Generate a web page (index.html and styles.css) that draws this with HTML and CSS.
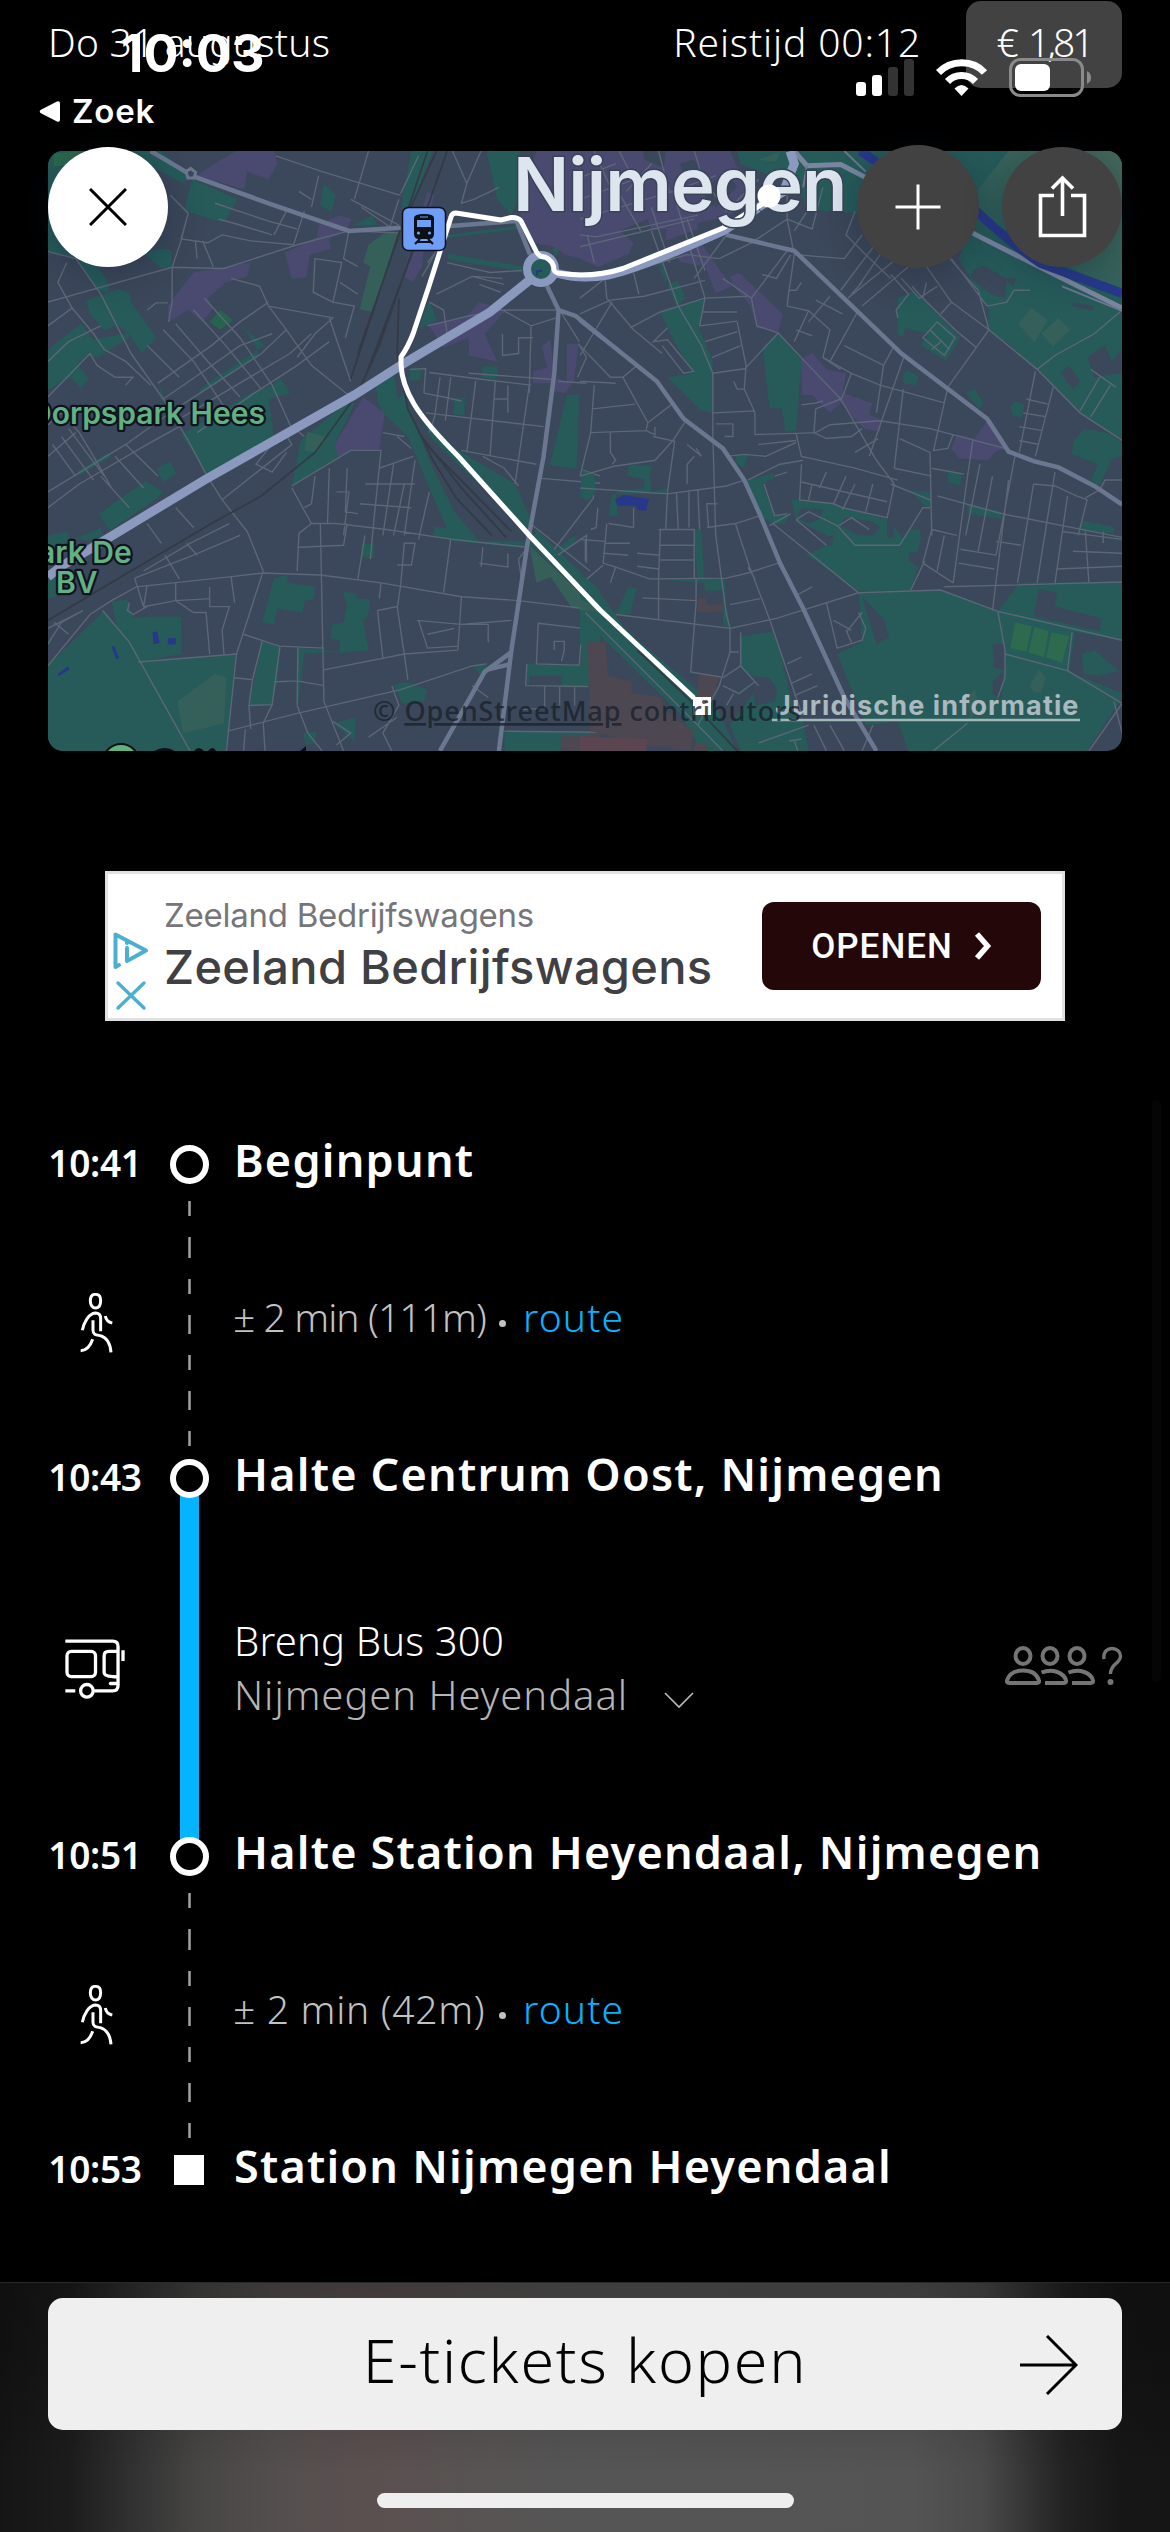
FILE: index.html
```html
<!DOCTYPE html>
<html lang="nl">
<head>
<meta charset="utf-8">
<title>Reisadvies</title>
<link rel="stylesheet" href="styles.css">
</head>
<body>
<main class="screen">
  <header class="trip-head">
    <span class="trip-date">Do 31 augustus</span>
    <span class="trip-time">Reistijd 00:12</span>
    <span class="trip-price">€ 1,81</span>
  </header>

  <div class="status">
    <div class="status-row">
      <span class="clock">10:03</span>
      <svg class="status-icons" viewBox="856 58 236 40" width="236" height="40">
        <g fill="#fff"><rect x="856" y="82" width="10" height="14" rx="3"/><rect x="872" y="75" width="10" height="21" rx="3"/></g>
        <g fill="#333"><rect x="888" y="67" width="10" height="29" rx="3"/><rect x="904" y="59" width="10" height="37" rx="3"/></g>
        <g fill="none" stroke="#fff" stroke-width="7"><path d="M938.500 72.500C951 59.500 973 59.500 984.500 72.500"/><path d="M947.500 81.500C955 73.500 968 73.500 975.500 81.500"/></g>
        <path d="M954.500 88.500Q961.500 81.500 968.500 88.500L961.500 96Z" fill="#fff"/>
        <rect x="1010.500" y="59.500" width="72" height="36" rx="10" fill="none" stroke="#8a8a8a" stroke-width="3"/>
        <rect x="1015" y="64" width="35" height="27" rx="6" fill="#fff"/>
        <path d="M1087 71Q1091 73 1091 77.500T1087 84Z" fill="#8a8a8a"/>
      </svg>
    </div>
    <div class="back-row">
      <svg viewBox="0 0 21 21" width="21" height="21"><path d="M1.500 9Q0 10.500 1.500 12L18 20.500Q21 21.500 21 18.500V2.500Q21-.5 18 .5Z" fill="#fff"/></svg>
      <span>Zoek</span>
    </div>
  </div>

  <section class="map">
    <svg class="map-art" viewBox="0 0 1074 600" width="1074" height="600">
      <defs>
        <linearGradient id="hill" x1="0" y1="1" x2="1" y2="0"><stop offset="0" stop-color="#265b5a"/><stop offset="1" stop-color="#45695a"/></linearGradient>
      </defs>
      <!-- western half -->
      <g transform="translate(-8 -11) scale(.35714 .39541)">
        <g class="green">
          <path d="M22 28H340L420 95 400 110 300 60V120H160L22 180Z"/>
          <path d="M22 180L140 290 195 365 190 385 165 380 100 300 22 282Z"/>
          <path d="M130 405L215 378 250 385 255 410 325 500 285 540 250 490 195 455 212 470 180 482 140 440Z"/>
          <path d="M295 290Q330 265 368 280V320L340 325Z"/>
          <path d="M425 98L553 150 515 210 405 178Z"/>
          <path d="M795 110L830 140 815 182 784 165Z"/>
          <path d="M22 530L115 465 150 505 250 487 250 500 160 550 132 545 105 565 137 605 115 628 85 600 22 632Z"/>
          <path d="M565 470L630 520 610 530ZM445 630L610 530V545L450 640ZM330 610L350 655 342 665Z"/>
          <path d="M395 745L590 640 650 620 670 600 702 640 640 655 655 750 560 810 470 848Z"/>
          <path d="M325 833L365 812 382 845 345 865ZM105 838L190 790 200 800 110 850ZM165 945L295 862 345 890 330 905 195 988ZM22 1000L75 990 90 1020 22 1050ZM95 1010L170 980 180 1015ZM22 1115L45 1090V1155L22 1160Z"/>
          <path d="M730 760L870 655 880 668 825 770 865 785 705 875Z"/>
          <path d="M940 620L990 590 1005 670 960 690 945 660Z"/>
          <path d="M960 690L1020 640 1060 740 1090 810 1160 940 1230 1015 1365 1015V1032L1155 1015 1095 890 1030 750Z"/>
          <path d="M1030 640Q1060 700 1170 785L1200 800 1330 870 1370 950V990L1100 760Z"/>
          <path d="M1390 985L1568 1140V1190L1370 1020Z"/>
          <path d="M1040 28H1100L1035 180 1010 170ZM880 215L930 190 945 215ZM1145 240L1350 215 1340 225 1140 248ZM1145 288L1355 320 1350 332 1140 302Z"/>
          <path d="M1250 28H1345V130L1320 190 1280 150ZM1435 275L1475 250 1440 300ZM1065 465L1090 405 1112 455 1060 478Z"/>
          <path d="M1035 578L1070 580 1065 605 1035 610ZM1240 572L1282 572 1278 607 1235 600ZM1160 655L1190 650 1188 695 1157 697ZM1475 645L1510 645 1502 832 1428 822Z"/>
          <path d="M1520 835L1553 845 1550 890 1535 910 1515 905ZM1450 1035L1495 1000 1505 1010 1460 1045ZM1105 978L1145 983 1150 1010 1100 1005ZM900 1022L936 1022 935 1058 898 1056Z"/>
          <path d="M655 1108L693 1100V1120L770 1130 768 1160 742 1165 735 1195 665 1185 655 1225 622 1220Z"/>
          <path d="M848 1142L885 1147 888 1160 925 1162 918 1205 905 1215 920 1290 840 1298V1265L813 1260 818 1225 850 1220 860 1178Z"/>
          <path d="M22 1328L180 1190 240 1255 275 1322 548 1298 522 1545H22Z"/>
          <path d="M200 1168L245 1162 260 1210 300 1205 395 1205 397 1300 275 1320 220 1245Z"/>
          <path d="M622 1268L672 1280 665 1370 650 1428 585 1430ZM722 1285L850 1295 740 1298 722 1430ZM988 1378L1030 1370 1085 1390 1075 1420 1015 1425ZM735 1500L775 1495 770 1525 745 1530ZM820 1475L885 1460 880 1520Z"/>
          <path d="M1212 1330L1255 1325 1235 1355ZM1363 1325L1515 1328 1520 1195 1568 1230V1270L1538 1270V1380H1460V1355H1370V1380L1363 1370ZM1300 1495H1568V1545H1300Z"/>
        </g>
        <g class="meadow">
          <path d="M965 235L1008 235 930 435 895 428 925 320 905 310 920 265Z"/>
          <path d="M748 738L800 750 770 790 740 785ZM1370 1025L1560 1185 1490 1185 1430 1105 1390 1120Z"/>
          <path d="M385 1420L490 1350 522 1360 515 1475 470 1485 400 1500Z"/>
          <path d="M475 460L505 430 540 455 505 480Z" fill="#27644f"/>
          <path d="M38 35L110 28V60L38 67Z" fill="#2b6a4c"/>
        </g>
        <g class="shops">
          <path d="M505 50L550 28H655L665 60 640 100 580 80 572 125 440 90Z"/>
          <path d="M430 335L590 310 580 345 520 360 470 400 485 425 455 460 415 430 360 460 358 420Z"/>
          <path d="M685 285L775 245 780 215 840 190 872 200 860 225 810 250 815 275 755 290 745 348 705 350Z"/>
          <path d="M1085 130L1105 140 1080 215 1070 320 1045 358 1015 345Z"/>
          <path d="M1340 160L1390 28H1568V310L1470 290 1440 270 1380 260 1350 200Z"/>
          <path d="M1085 465L1190 450 1230 410 1305 430 1245 490 1280 560 1200 545 1200 500 1130 525Z"/>
          <path d="M1405 520L1430 505 1440 600 1475 610V515H1508L1495 610 1470 640 1435 635 1430 615 1380 615 1382 585 1420 575Z"/>
          <path d="M905 650L965 690 950 782 870 785 835 800 825 770Z"/>
        </g>
        <g class="clay"><path d="M1538 1270H1568V1545H1458V1508H1538Z"/></g>
        <g class="water"><path d="M315 1245L328 1243 335 1272 318 1275ZM358 1260H380V1276H358ZM200 1282L208 1280 222 1310 214 1314ZM50 1350L80 1330 82 1340 52 1356Z"/></g>
        <g class="street">
          <path d="M22 282L100 300 170 390 255 540 345 655 415 760 465 845 510 910 580 990 625 1090 550 1300 522 1545"/>
          <path d="M22 410L370 322 515 325 720 265 865 230 1010 235M22 470L90 425 50 360 75 310M90 425L150 490 180 530 240 560 310 620M22 560L80 510 170 470"/>
          <path d="M365 140L415 185 395 255 370 322 370 410 360 460M300 430L325 412 358 412M415 185L395 250 470 260 510 240 590 255 710 265 740 180M490 160L640 205 720 225M500 200L560 215 650 240M455 255L485 320M435 255L440 300"/>
          <path d="M535 350L615 370 640 420 690 480 760 570 870 650M460 400L560 500 650 620 700 720 740 750M430 430L520 520 620 630M380 465L470 560 560 650M345 480L430 560 520 680M300 520L390 600"/>
          <path d="M330 615L480 520 560 460 640 410M345 655L450 590 560 520 650 490M380 680L500 610 620 540 690 480M400 700L550 620 700 540 760 490M440 740L600 640 720 570 810 510M640 420L820 450 770 490 720 550"/>
          <path d="M22 650L140 540 160 570 210 600 260 600 240 620M22 720L60 690 110 740 150 800 200 880M60 750L150 860M35 770L100 850M80 730L180 850M22 800L100 740M22 890L240 770 380 680M22 930L110 870 300 770 400 720M170 850L250 930M210 800L290 880M240 770L330 850"/>
          <path d="M660 40L790 80 1010 140M780 90L760 170M725 130L760 150M920 28L880 150M900 170L980 220 1005 150M1060 40L1010 135M870 150L1005 215M690 180L655 240M865 230L850 300 890 320M770 300L845 310 820 410 765 385ZM820 410L880 420 855 500M840 360L890 390M810 450L870 610"/>
          <path d="M1155 28L1195 110 1180 160 1215 150 1285 120M1195 110L1235 28M1085 310L1145 240M1070 345L1105 290M1140 310L1260 335 1350 330M1110 390L1210 345 1300 365M1090 410L1130 430 1140 490M1085 470L1200 445 1290 430 1450 430M1210 345L1295 350M1230 365L1290 385M1295 430L1375 470 1445 450M1375 470L1370 640"/>
          <path d="M1295 490V545L1340 540V500H1380M1200 590L1430 605M1035 580L1080 578 1075 640M1090 588L1235 605 1375 620M1080 690L1410 725M1075 640L1130 650 1180 660M1120 600L1105 700 1090 740M1150 600L1135 710M1220 610L1195 790M1275 610L1260 800M1310 620V690M1270 655H1310M1370 620L1330 870M1180 785L1390 820M1240 800L1300 830 1340 875"/>
          <path d="M1450 610L1530 615M1508 515L1530 550 1505 600M1455 430L1510 510M1395 855L1568 868M1440 1035L1550 905 1535 840M1530 1070V1000L1450 1050M1568 850L1520 835M1380 975L1540 1090"/>
          <path d="M510 910L705 770 685 740 640 780 605 820 650 840 690 790M705 880L760 970 830 970 970 985 1155 1010 1365 1030M770 850L760 920 740 930M705 875L870 785H955L950 830 1045 800M860 830L855 940 890 945M810 830L805 970M830 890L865 890 850 1000M955 785L935 960 925 1060M990 820L960 1000M910 870H1050M895 920L1040 930M1050 810L1020 1000M1090 890L1060 1010M1020 870L990 1000M960 740L1020 750M1040 780L1000 750"/>
          <path d="M760 970L725 995 720 1090M785 970L795 1420 850 1545M725 1030L850 1025 860 970M785 1100L625 1095 530 1105 270 1130 200 1165 140 1200 22 1330M785 1100L955 1120 1180 1155 1340 1165 1568 1190M890 1110L910 1000M1010 1125L1020 1020 1050 1020 1040 1075 1000 1075M1130 1145L1150 1010M1240 1030L1235 1080M1230 1070L1310 1080V1045M1350 1120L1340 1060 1365 1030"/>
          <path d="M265 1108L430 1050 560 1000M290 1090L420 1020 530 970M265 1108L290 1180 380 1165 475 1160M300 1125L290 1180 M380 1120V1165L430 1195H465L475 1300M475 1130V1180L530 1180 510 1240 515 1300M535 1105L545 1170M250 1170L245 1190 260 1200 300 1180M22 1275L60 1220 120 1190M22 1235L120 1190M40 1220L80 1250M350 1050L390 1110M300 970L340 1020M410 1020L440 1050M380 930L430 980"/>
          <path d="M175 1190L250 1270 420 1545M275 1320L550 1300M570 1250L670 1280 795 1285M545 1360L595 1365 622 1268M595 1365L585 1430 650 1428 672 1280M660 1370L720 1368 795 1380M722 1285L720 1430M525 1495L720 1450 1010 1390 1210 1330 1250 1325M795 1340L1020 1300M945 1190L1000 1180 1020 1300 1030 1365M945 1190L960 1310M955 1120L950 1160M1000 1185L1010 1125M1180 1155L1170 1290 1020 1300M1055 1215L1180 1225 1320 1215M1060 1215L1085 1285 1170 1280M1085 1250L1160 1235M1180 1225H1255V1270"/>
          <path d="M575 1490L570 1545M625 1475L630 1545M585 1430L590 1490M650 1428L625 1475M720 1430L750 1500 790 1545M820 1470L870 1500 830 1530M985 1380L1005 1430 960 1500 985 1545M920 1510L1000 1460M1210 1380L1255 1410M1395 1222L1518 1235 1510 1328 1390 1325ZM1440 1290V1268H1468V1290L1460 1318M1363 1325L1360 1380 1535 1382M1300 1495L1568 1498M1413 1380V1440M1455 1380V1430M1497 1380V1430M1345 1440L1400 1438"/>
        </g>
        <g class="rail">
          <path d="M1110 28L1005 235 870 605M1140 28L1050 260 950 520 890 640 770 790 620 900 480 970 180 1130 22 1215M1085 28L1040 150 890 540M1005 400L1000 540 1030 680 1100 810 1165 905 1265 1000M1060 740L1180 880 1305 1005M1080 770L1320 990M1045 280L910 600"/>
        </g>
        <g class="road">
          <path d="M310 28L430 92 640 160 865 230 1010 222M1140 218L1330 205M1420 370L1452 430 1440 590 1410 800 1365 1020 1320 1290 1285 1545M1330 195L1372 290M1452 430L1500 445 1568 495M1320 1295L1245 1345 1120 1545M1250 1340L1320 1325"/>
          <path d="M422 72L436 82 431 96H414L409 80Z" fill="#3b475a" style="stroke-width:3"/>
        </g>
        <path class="artery" d="M22 1105L60 1078 185 1010 460 860 880 645 1010 570 1140 500 1260 435 1370 355"/>
      </g>
      <!-- eastern half -->
      <g transform="translate(532 -11) scale(.35714 .39541)">
        <g class="green">
          <path d="M440 28H1518V500L1400 430 1340 390 1120 330 980 190 770 185 640 175 600 110 560 100 450 60Z"/>
          <path d="M1120 190L1518 420V760L1400 690 1280 580 1140 480 1145 430 1060 300Z"/>
          <path d="M195 230L215 235 245 350 240 360 225 330ZM245 365L275 355 295 400 270 420ZM225 435L350 402 335 480 372 560V690L340 685 245 600 320 590 270 520Z"/>
          <path d="M512 525L555 488 620 555 605 735 575 738 565 678 530 678Z"/>
          <path d="M890 400L935 382 1065 500 1025 558 955 520 975 490 910 475 905 500 888 490Z"/>
          <path d="M905 590L920 582 948 598 940 620 905 615ZM1080 640L1105 630 1130 665 1120 680ZM1205 675L1220 660 1245 670 1235 705 1210 695ZM1030 840H1070L1065 875 1030 865ZM1380 765L1410 730 1475 740 1518 765V800L1490 805 1455 875 1430 860 1450 820 1378 795Z"/>
          <path d="M435 800L470 795 460 830 440 820ZM468 862L540 842 545 855 510 870 545 950 590 945 570 972 540 970 505 950Z"/>
          <path d="M592 910L690 915 780 940 860 960V1005H878V980L905 1005 920 985 950 985 955 1005 945 1040 920 1045 920 1065 945 1080 925 1140H780L635 1050 700 1020 690 1000 605 960Z"/>
          <path d="M925 885L985 890V930L965 925ZM1085 920L1180 940V958L1085 945ZM1405 962L1495 978V995L1400 988ZM135 820L202 825 195 850 200 890 245 880 240 895 90 895 80 950H105L100 890 180 880V858L135 850Z"/>
          <path d="M320 985L340 985 348 1110 328 1108ZM135 1130L158 1135 140 1200 100 1200ZM195 1110L405 1108 410 1180 425 1240 400 1225 400 1140 350 1140 348 1120Z"/>
          <path d="M0 1095L60 1150 130 1240 380 1430 440 1545H340L280 1450 0 1205Z"/>
          <path d="M450 1255L540 1243 620 1450 640 1545H450L420 1480 500 1380 450 1330Z"/>
          <path d="M780 1145L1010 1138 1170 1192 1230 1120 1518 1118V1410L1420 1545H830L720 1300 790 1270Z"/>
          <path d="M5 835L40 845 45 890 25 912 0 905ZM0 1210L30 1205 25 1280 0 1275Z"/>
        </g>
        <g class="blocks">
          <path d="M1100 330L1130 318 1195 350 1190 400 1150 390 1095 350ZM1185 350H1220L1215 370ZM1140 480L1200 515 1250 560 1240 585 1210 570 1170 550ZM1420 550L1470 520 1490 560 1518 530V590L1440 600ZM1345 590L1370 570 1400 610 1380 630ZM1380 410L1440 420 1435 432 1378 420Z"/>
          <path d="M620 930L680 935 670 960 640 970 605 955ZM740 955L820 965 840 980 820 1000 780 1000 730 975ZM680 1005L710 1000 705 1025 690 1025Z"/>
          <path d="M790 1155L815 1180 850 1210 865 1258 830 1275ZM1285 1135L1335 1145 1330 1180 1460 1210 1455 1242 1270 1205ZM1155 1275L1190 1275V1340L1160 1335ZM1155 1370L1185 1345 1180 1415 1155 1400ZM1385 1245L1518 1265V1350L1440 1290 1405 1300 1410 1350 1450 1355 1518 1340V1400L1370 1345ZM890 1470L920 1545H830L800 1480ZM640 1280L700 1250 740 1350 720 1355 810 1545H740L600 1450 560 1290ZM480 1355L530 1360 552 1390 545 1420 490 1430Z"/>
        </g>
        <path d="M1110 130L1200 28H1518V375L1400 335 1120 190Z" fill="url(#hill)"/>
        <g class="meadow">
          <path d="M1228 465L1262 425 1310 455 1272 512ZM1292 490L1340 450 1372 480 1325 522ZM1260 1380L1285 1340 1305 1360 1290 1398 1270 1395ZM1085 1410L1105 1388 1115 1420 1095 1470ZM0 1160L70 1192 0 1190ZM500 50L560 30 550 55Z"/>
          <path d="M1218 1220L1265 1230 1250 1295 1205 1285ZM1272 1232L1312 1242 1300 1308 1256 1296ZM1320 1245L1370 1255 1350 1322 1305 1308Z" fill="#2d6a4e"/>
        </g>
        <g class="shops">
          <path d="M0 28H420L450 90 500 120 420 190 330 210V225L130 290 50 322 0 300Z"/>
          <path d="M270 290L340 262 400 340 425 370 380 388 350 320 280 308ZM420 345L445 335 568 440 555 485 495 475 478 420 430 370ZM618 555L650 538 690 580 745 590 735 640 818 665 810 695 845 708 840 738 795 730 730 665 700 690 650 645 622 645Z"/>
          <path d="M1040 780L1055 745 1105 755 1140 710 1190 780 1160 790 1145 810 1060 805Z"/>
        </g>
        <g class="blocks"><path d="M175 28H240L235 70 180 50ZM280 60L320 50 345 80 290 90ZM110 230L190 200 200 230 240 225 240 290 130 300 150 260ZM360 110L420 90 440 120 380 170 350 150Z"/></g>
        <g class="clay"><path d="M20 1270H72L78 1355 145 1368V1400L230 1410 235 1440 320 1495 310 1545 190 1530 30 1495ZM332 1350L390 1358 370 1420H330ZM330 1158L352 1158 355 1175 400 1175 403 1192 330 1195ZM320 1525H360L355 1545H318Z"/><path d="M0 1508L190 1515 185 1545H0Z" fill="#5a4550"/></g>
        <g class="water"><path d="M98 910L122 898 193 908 185 938 160 935 158 925 105 925Z"/></g>
        <g class="street">
          <path d="M0 400L70 350 150 330 300 290 390 300M20 240L40 310M70 350L75 400 150 480 230 540M0 440L85 405 180 395 350 355M90 410L0 545M150 335L165 390M0 520L85 600 120 600 160 570M0 610L100 615M40 620L30 740 185 735 190 715 120 600M35 680L155 668M30 740L0 850M85 740V790L100 810 90 820M0 850L95 825 210 810 260 760 300 705M190 715L255 670M205 750L265 762 245 890 240 985M185 735L210 745V725"/>
          <path d="M110 28L150 100 0 150M40 28L90 130M0 200L260 130 380 90M0 240L45 245 330 190M0 270L320 200M220 28L250 130M320 28L345 100M100 120L170 230M200 170L250 310M200 60L130 130M330 80L410 180M0 95L100 60M260 130L350 400M300 200L350 330"/>
          <path d="M140 475L225 435 350 400 470 395M200 230L275 420 340 520 372 590V750L380 1000 410 1200 420 1235M350 400L335 470M345 435H440M335 470L440 458M350 510L440 485M370 550L450 520M372 590L465 578M230 520L290 590 318 585 245 505 205 510 245 475M440 460L465 570 460 630 490 690V745L605 742M430 610L440 630H460M372 690L490 685M380 718H428V750H405M465 575L555 488 495 470 480 400 400 350"/>
          <path d="M410 240L320 350M480 260L390 300M580 280L480 400M510 340L550 350 590 290M580 200L600 290 740 300 790 240M480 260L580 200 580 100M580 200L650 225 680 120M410 180L500 100M770 180L745 240 800 290M640 175L600 230M620 360L605 380H585L580 420 640 432 600 510M640 432L700 480 680 550 730 580M660 405L735 440M640 460L700 395M605 480L650 495M580 415L600 290"/>
          <path d="M730 380L830 260M750 400L900 290M790 420L920 320M840 290L780 370M800 290L870 350M870 340L920 390 885 430 890 450M760 390L790 360M930 370L960 400 1050 480 1110 525M900 350L950 400 1000 370M960 400L970 360M1010 440L1040 410M970 320L1040 410 1145 480 1030 625M1035 300L1115 380 1145 480 1280 580 1400 690 1518 760M1140 420L1195 410 1215 380H1260M1280 580L1330 545 1440 490 1518 430M1140 420L1040 300"/>
          <path d="M960 500L1000 460 1050 500 1020 545ZM980 480L1035 530M1010 510L985 530M555 488L640 570 730 655 830 810 880 870M780 430L700 560M740 520L850 570 880 520M680 550L760 590 840 620 1020 665M730 660L760 590M910 540L810 800M850 570L830 690M905 630L880 830M1030 625L990 785 1030 780 1045 745M730 655L660 680M620 670L660 665 680 660M605 742L660 740 700 720M660 680L655 740 690 755 760 750 790 730M605 742L620 800 770 830 890 860M605 765L520 800 460 795 410 800M500 770L605 760M625 810L560 820 470 860"/>
          <path d="M700 720L840 710 980 730 1190 780M895 755L980 790 985 1000M770 790L835 755M880 830L985 850M620 820L615 910 710 920 735 930 860 955 880 870M620 865L860 915M650 870L640 910M690 840L670 880 M745 850L710 920M770 870L735 935M820 870L800 940M985 830L1075 845M1000 900L1180 945 1518 1005M980 910L870 870M1100 760L1085 850 1045 1120M1120 820L1080 1000M1155 850L1115 1040M1200 860L1155 1190M1220 790L1165 1050"/>
          <path d="M1270 870L1225 1120M1270 870L1330 875 1390 900 1420 910 1395 1000M1330 840L1310 950 1280 1120M1365 900L1330 1120M1415 905L1455 885M1415 990L1425 1120M1350 990L1518 1010M1380 1040L1518 1045M1335 1085L1518 1078M1165 1015L1235 1025M1065 1035L1165 1050M1060 1070L1160 1085M985 985L1055 1000M960 1070L985 985M1020 1000L1000 1090M960 1070L1045 1120M925 1140L965 1065M1465 990V1020M1250 655L1310 668M1240 690L1305 700M1230 725L1295 735M1230 760L1285 770M1275 585L1230 790M1325 625L1275 800M1430 580L1500 625M1455 600L1400 685M1485 620L1430 700M1518 860H1470L1455 885"/>
          <path d="M0 880L245 895 410 875 460 860M80 970L150 980V930M75 970L65 1070 100 1080 195 1110 410 1108 470 1095 555 1070M65 1045L135 1050M160 1045L225 1050M160 1078L220 1085M100 1080L85 1120M70 1020L140 1020M20 1110L65 1075M220 985H320V1110M225 1025H318M225 1062H318M225 985L220 1110M270 890L275 985M305 885V980M330 885L335 985M360 980L355 920H385M355 980L435 970 505 950M435 970L475 1080 530 1210 620 1450M470 1080L490 1110M0 1010L70 1015M15 1065V1010M50 930L45 980 30 985"/>
          <path d="M175 1158L325 1165M220 1110V1215M100 1200L420 1235 550 1210 780 1145M325 1110V1170L310 1345 395 1358M420 1235V1295L390 1380 330 1480M450 1245V1330L500 1380M450 1330L400 1360M420 1295H445M420 1175L505 1160M610 1150L650 1130M690 1170L720 1285 790 1265 800 1235 780 1195M710 1215L760 1240M745 1245L790 1195M745 1240L760 1270M580 1325L620 1308M590 1375L650 1350M600 1405L665 1380M540 970L780 1145 1010 1138 1170 1192 1518 1265M1020 1130L1518 1118M1170 1192L1190 1290V1360L1170 1410M1190 1300L1365 1342 1378 1245M1365 1342L1518 1425 1425 1545M1495 1420L1518 1500"/>
          <path d="M500 1525L640 1480M585 1520L620 1515M600 1520L610 1545M655 1480L690 1545M700 1480L740 1545M820 1480L790 1545M990 1545L1085 1475M15 1195L330 1480 400 1545M400 1380L445 1400 490 1370M430 1400L410 1430M590 945L530 975M605 960L690 1025M720 975L770 1025H895L960 930H980M725 975L760 955 810 985M545 850L580 840M515 870L545 950 580 945M605 960L640 940 720 975M300 770L340 800 325 780M300 870V820L320 800"/>
        </g>
        <path class="rail" d="M160 1290L300 1410 440 1545"/>
        <g class="road">
          <path d="M0 455L90 520 215 610 290 705 400 780 460 860 505 950 560 1070 625 1185 740 1410 830 1545M410 240L600 280 710 375 900 540 1140 705 1200 788 1270 812 1340 828 1440 875 1518 922"/>
          <path d="M600 28L635 65 730 62 1120 245 1350 350 1518 425" style="stroke:#7a86a0;stroke-width:5"/>
          <path d="M740 28L800 80M635 65L625 120M1350 370L1518 432" style="stroke-width:2"/>
        </g>
        <path d="M785 28L830 55M1110 180Q1210 265 1290 312L1518 388" fill="none" stroke="#27388a" stroke-width="9"/>
        <path class="artery" d="M588 28L600 60 570 130 500 170"/>
      </g>
      <!-- roundabout and travelled route -->
      <circle cx="493" cy="118" r="14" fill="#265b5a" stroke="#8a99bd" stroke-width="8"/>
      <path d="M489 125V120H494" fill="none" stroke="#27388a" stroke-width="2"/>
      <path d="M508 122Q533 129 560 124Q590 118 675 80L710 57" fill="none" stroke="#8a99bd" stroke-width="9"/>
      <path d="M646 547L552 459 481 384 410 305Q378 273 366 253T353 214V206Q360 196 365 183L381 135 403 66Q404 62 408 62L453 69 463 66.500Q470 66 473 70L488 100Q491 106 497 106 506 110 506 119 507 122 513 122.500 545 127 575 117.500L675 77 716 52" fill="none" stroke="#fff" stroke-width="5" stroke-linejoin="round"/>
      <text class="city" x="465" y="60">Nijmegen</text>
      <circle cx="721" cy="45" r="11.500" fill="#fff"/>
      <path d="M645 546H663V564H645Z" fill="#fff"/><circle cx="656" cy="551" r="2" fill="#555"/>
      <g class="park">
        <text x="-18" y="273">Dorpspark Hees</text>
        <text x="-29" y="412">Park De</text>
        <text x="8" y="442">BV</text>
      </g>
      <circle cx="73" cy="611" r="18" fill="#62b183" stroke="#111" stroke-width="2"/>
      <path d="M106 600Q117 594 127 600ZM146 600Q151 594 156 600ZM160 600Q165 594 168 600ZM252 600L258 595V600Z" fill="#0c1118"/>
      <!-- station marker -->
      <rect x="354.500" y="56.500" width="43" height="43" rx="6" fill="#6f9ef8" stroke="#10131c" stroke-width="1.500"/>
      <path d="M366 67Q366 63 376 63T386 67V83Q386 88 381 88H371Q366 88 366 83Z" fill="#0c1118"/>
      <path d="M369 69H383V76H369ZM372 65.500H380V66.500H372Z" fill="#6f9ef8"/><circle cx="370.500" cy="82" r="1.600" fill="#6f9ef8"/><circle cx="381.500" cy="82" r="1.600" fill="#6f9ef8"/>
      <path d="M372 88L367 93M380 88L385 93M370 91H382" stroke="#0c1118" stroke-width="2.200" fill="none"/>
      <g class="legal"><text x="727" y="564">Juridische informatie</text><path d="M724 569H1032" stroke="#a0b9b8" stroke-width="2.500"/></g>
      <text class="osm" x="325" y="570">© <tspan text-decoration="underline">OpenStreetMap</tspan> contributors</text>
    </svg>
    <button class="round close" aria-label="Sluiten"><svg viewBox="0 0 38 38" width="38" height="38"><path d="M1 1L37 37M37 1L1 37" stroke="#000" stroke-width="3"/></svg></button>
    <button class="round add" aria-label="Toevoegen"><svg viewBox="0 0 46 46" width="46" height="46"><path d="M23 .5V45.500M.5 23H45.500" stroke="#fff" stroke-width="3"/></svg></button>
    <button class="round share" aria-label="Delen"><svg viewBox="0 0 50 64" width="50" height="64"><path d="M17 20.500H3.500V60.500H47.500V20.500H34M25.500 41V3M15 13.500L25.500 3 36 13.500" fill="none" stroke="#fff" stroke-width="3.600"/></svg></button>
  </section>

  <section class="ad">
    <svg class="ad-marks" viewBox="112 930 38 82" width="38" height="82">
      <g fill="none" stroke="#4bafd0" stroke-width="4" stroke-linejoin="round" stroke-linecap="round">
        <path d="M119 965L115.500 967V934.500L146 950.500 127 961V948"/><path d="M127 942.500V943"/>
        <path d="M118 983L144 1008M144 983L118 1008" stroke-width="3.400"/>
      </g>
    </svg>
    <div class="ad-text">
      <span class="ad-brand">Zeeland Bedrijfswagens</span>
      <span class="ad-title">Zeeland Bedrijfswagens</span>
    </div>
    <div class="ad-button">
      <span>OPENEN</span>
      <svg viewBox="0 0 19 28" width="19" height="28"><path d="M4 2L14.500 14 4 26" fill="none" stroke="#fff" stroke-width="5.500"/></svg>
    </div>
  </section>

  <section class="journey">
    <div class="stop"><span class="time">10:41</span><span class="dot"></span><span class="place">Beginpunt</span></div>

    <div class="leg walk">
      <svg class="walker" viewBox="119 38 100 180" width="33.300" height="60"><g fill="none" stroke="#fff" stroke-width="9"><path d="M165 42C175 42 181 48 181 60 181 75 176 83 167 83 156 83 150 74 150 62 150 49 156 42 165 42Z"/><path d="M126 150C131 125 145 100 165 98 177 98 181 105 181 115V153M158 120V150C158 165 170 164 180 166 200 172 210 190 212 216M157 177C150 198 140 211 121 211M195 107C197 118 205 126 216 128"/></g></svg>
      <svg class="dashes" viewBox="0 0 4 254" width="4" height="254"><path d="M2.500 11V256"/></svg>
      <p class="note"><span class="n111">± 2 min (111m)</span><i></i><a>route</a></p>
    </div>

    <div class="stop"><span class="time">10:43</span><span class="dot"></span><span class="place">Halte Centrum Oost, Nijmegen</span></div>

    <div class="leg ride">
      <svg class="bus" viewBox="44 38 184 188" width="61" height="62.500"><g fill="none" stroke="#fff" stroke-width="10"><path d="M45 47H188Q204 47 204 63V180Q204 197 188 197H132M45 197H75M203 155Q162 155 162 142V92Q162 78 176 78H203M219 75V107"/><rect x="50" y="78" width="86" height="76" rx="13"/><circle cx="110" cy="197" r="19"/><path d="M181 175H200" stroke-linecap="round"/></g></svg>
      <span class="line"></span>
      <div class="service">
        <span class="name">Breng Bus 300</span>
        <span class="toward">Nijmegen Heyendaal <svg viewBox="0 0 30 17" width="30" height="17"><path d="M1 1L15 15 29 1" fill="none" stroke="#bbb" stroke-width="1.600"/></svg></span>
      </div>
      <svg class="crowd" viewBox="1004 1645 120 42" width="120" height="42"><g fill="none" stroke="#757575" stroke-width="4">
        <ellipse cx="1023" cy="1656" rx="7.500" ry="8"/><ellipse cx="1050" cy="1656" rx="7.500" ry="8"/><ellipse cx="1077" cy="1656" rx="7.500" ry="8"/>
        <path d="M1009 1683Q1006.500 1683 1007 1680.500C1009 1674 1015 1670.500 1023 1670.500S1037 1674 1039 1680.500Q1039.500 1683 1037 1683ZM1041.500 1672.500C1053 1668 1064 1673 1066 1680.500Q1066.500 1683 1064 1683H1045M1068.500 1672.500C1080 1668 1091 1673 1093 1680.500Q1093.500 1683 1091 1683H1072"/>
        <path d="M1104 1659C1103 1651 1108 1648.500 1112 1648.500 1117 1648.500 1120.500 1652 1120.500 1656 1120.500 1664 1110.500 1663 1110.500 1674" stroke-width="3.400"/></g><circle cx="1110.500" cy="1682" r="3" fill="#757575"/></svg>
    </div>

    <div class="stop"><span class="time">10:51</span><span class="dot"></span><span class="place">Halte Station Heyendaal, Nijmegen</span></div>

    <div class="leg walk">
      <svg class="walker" viewBox="119 38 100 180" width="33.300" height="60"><g fill="none" stroke="#fff" stroke-width="9"><path d="M165 42C175 42 181 48 181 60 181 75 176 83 167 83 156 83 150 74 150 62 150 49 156 42 165 42Z"/><path d="M126 150C131 125 145 100 165 98 177 98 181 105 181 115V153M158 120V150C158 165 170 164 180 166 200 172 210 190 212 216M157 177C150 198 140 211 121 211M195 107C197 118 205 126 216 128"/></g></svg>
      <svg class="dashes" viewBox="0 0 4 254" width="4" height="254"><path d="M2.500 11V256"/></svg>
      <p class="note"><span class="n42">± 2 min (42m)</span><i></i><a>route</a></p>
    </div>

    <div class="stop"><span class="time">10:53</span><span class="square"></span><span class="place">Station Nijmegen Heyendaal</span></div>
  </section>

  <footer class="buy">
    <button class="buy-button">
      <span>E-tickets kopen</span>
      <svg class="arrow" viewBox="0 0 58 60" width="58" height="60"><path d="M0 30H55M27 1L56 30 27 59" fill="none" stroke="#000" stroke-width="3"/></svg>
    </button>
    <div class="home"></div>
  </footer>
  <div class="scrollbar"></div>
</main>
</body>
</html>
```
FILE: styles.css
```css
* { box-sizing: border-box; }
body { margin: 0; background: #000; }
button { border: 0; padding: 0; font: inherit; }
svg { display: block; flex: none; }

.screen {
  position: relative;
  display: flex;
  flex-direction: column;
  width: 1170px;
  height: 2532px;
  overflow: hidden;
  background: #000;
  color: #fff;
  font-family: "Noto Sans", "Open Sans", sans-serif;
}

/* trip summary */
.trip-head {
  display: flex;
  align-items: center;
  height: 87px;
  margin: 1px 48px 63px;
  font-size: 39px;
  font-weight: 300;
  line-height: 54px;
}
.trip-head span { padding-bottom: 5px; white-space: nowrap; }
.trip-date { letter-spacing: .2px; }
.trip-time { margin-left: auto; letter-spacing: .85px; }
.trip-head .trip-price {
  display: flex;
  align-items: center;
  justify-content: center;
  width: 156px;
  height: 87px;
  margin-left: 45px;
  border-radius: 15px;
  background: #424242;
  letter-spacing: -3px;
  word-spacing: 5px;
}

/* system status bar lies over the scrolled content */
.status {
  position: absolute;
  inset: 0 0 auto;
  font-family: "Inter", sans-serif;
}
.status-row { display: flex; align-items: center; height: 107px; padding: 0 78px 0 121px; }
.clock { font-size: 52px; font-weight: 700; line-height: 60px; }
.status-icons { margin: 49px 0 0 auto; }
.back-row {
  display: flex;
  align-items: center;
  gap: 12px;
  margin: -16px 0 0 39px;
  font-size: 33px;
  font-weight: 600;
  line-height: 40px;
  letter-spacing: .8px;
}

/* map */
.map { position: relative; width: 1074px; height: 600px; margin: 0 48px; }
.map-art { border-radius: 15px; background: #3b475a; overflow: hidden; }
.map-art path { vector-effect: non-scaling-stroke; }
.green { fill: #265b5a; }
.meadow { fill: #35605a; }
.shops { fill: #4a4a70; }
.blocks { fill: #3b475a; }
.clay { fill: #4c4750; }
.water { fill: #27388a; }
.street { fill: none; stroke: #5b6677; stroke-width: 1.400; }
.rail { fill: none; stroke: #333a45; stroke-width: 1.700; }
.road { fill: none; stroke: #6b7790; stroke-width: 4.500; }
.artery { fill: none; stroke: #8a99bd; stroke-width: 9; }
.city {
  fill: #dde5ef;
  stroke: #3a4258;
  stroke-width: 3;
  paint-order: stroke;
  font: 600 74px "Inter", sans-serif;
  letter-spacing: -.9px;
}
.park {
  fill: #62b183;
  stroke: #10141f;
  stroke-width: 4.500;
  stroke-linejoin: round;
  paint-order: stroke;
  font: 600 30px "Inter", sans-serif;
}
.osm { fill: #1b222c; opacity: .8; font: 500 27px "Noto Sans", sans-serif; letter-spacing: .95px; }
.legal { fill: #a9b9bf; font: 700 27px "Inter", sans-serif; letter-spacing: 1.1px; }

.round {
  position: absolute;
  display: grid;
  place-items: center;
  width: 120px;
  height: 120px;
  border-radius: 50%;
  background: #424242;
  box-shadow: 0 6px 36px rgba(20, 30, 50, .35);
}
.close { left: 0; top: -4px; background: #fff; }
.add { left: 809px; top: -6px; width: 122px; height: 123px; }
.share { left: 954px; top: -4px; }

/* advert */
.ad {
  display: grid;
  grid-template-columns: 56px 1fr 279px;
  align-items: center;
  width: 960px;
  height: 150px;
  margin: 120px 0 0 105px;
  padding-right: 21px;
  border: 3px solid #e0e1e3;
  background: #fff;
  font-family: "Inter", sans-serif;
}
.ad-marks { margin: 50px 0 0 4px; }
.ad-text { display: flex; flex-direction: column; white-space: nowrap; }
.ad-brand { font-size: 33px; line-height: 42px; color: #75757a; letter-spacing: -.25px; }
.ad-title { font-size: 47px; font-weight: 500; line-height: 62px; color: #3f4043; letter-spacing: .3px; }
.ad-button {
  display: flex;
  align-items: center;
  justify-content: center;
  gap: 20px;
  height: 88px;
  border-radius: 12px;
  background: #240709;
  font: 500 35px "Roboto", sans-serif;
  letter-spacing: 1px;
}

/* journey */
.journey { display: flex; flex-direction: column; margin: 109px 48px 0; }
.stop, .leg { display: grid; grid-template-columns: 94px 60px 1fr; column-gap: 17px; }
.stop { align-items: center; justify-items: center; height: 60px; }
.time { padding-top: 5px; font-size: 37px; font-weight: 600; line-height: 54px; letter-spacing: -.3px; }
.place {
  justify-self: start;
  margin-left: -2px;
  font-size: 45px;
  font-weight: 600;
  line-height: 60px;
  letter-spacing: 1.200px;
  white-space: nowrap;
}
.dot {
  z-index: 1;
  width: 39px;
  height: 39px;
  margin-top: 8px;
  border: 6px solid #fff;
  border-radius: 50%;
  background: #000;
}
.square { width: 30px; height: 30px; margin-top: 8px; background: #fff; }
.walk { height: 254px; align-items: center; justify-items: center; }
.walker { margin: 11px 0 0 3px; }
.dashes { overflow: visible; }
.dashes path { fill: none; stroke: #a2a2a2; stroke-width: 2.500; stroke-dasharray: 15 21 21 21 15 21 19 21 15 21 19 21 15; }
.note {
  justify-self: start;
  display: grid;
  grid-template-columns: 266px 24px auto;
  align-items: center;
  margin: 0 0 0 -3px;
  font-size: 39px;
  font-weight: 300;
  line-height: 54px;
  color: #c2c2c2;
  white-space: nowrap;
}
.n111 { letter-spacing: -.9px; }
.n42 { letter-spacing: .7px; }
.note i { width: 7px; height: 7px; margin-top: 12px; border-radius: 50%; background: #c2c2c2; }
.note a { color: #04b4ff; letter-spacing: 1.100px; }
.ride { grid-template-columns: 94px 60px 1fr auto; height: 318px; align-items: center; justify-items: center; }
.bus { margin-top: 12px; }
.line { align-self: stretch; width: 19px; margin: -20px 0; background: #04b4ff; }
.service {
  justify-self: start;
  display: flex;
  flex-direction: column;
  margin: 10px 0 0 -2px;
  font-size: 40px;
  font-weight: 300;
  line-height: 54px;
}
.name { letter-spacing: .2px; }
.toward { display: flex; align-items: center; gap: 36px; color: #b5b5b5; letter-spacing: .950px; }
.toward svg { margin-top: 10px; }
.crowd { margin: 5px -2px 0 0; }

/* purchase bar */
.buy {
  position: absolute;
  inset: auto 0 0;
  display: flex;
  flex-direction: column;
  align-items: center;
  height: 250px;
  padding: 15px 48px 0;
  border-top: 1px solid #2a2a2a;
  background:
    linear-gradient(rgba(0, 0, 0, .28), rgba(0, 0, 0, .2) 35%, rgba(0, 0, 0, 0) 75%),
    linear-gradient(90deg, #151515 0, #1c1c1c 6%, #303030 11%, #474645 17%, #544f4e 24%, #5b5050 32%, #575453 42%, #555 50%, #545454 78%, #4a4a4a 84%, #222 91%, #161616 96%, #151515);
}
.buy-button {
  display: grid;
  grid-template-columns: 100px 1fr 100px;
  align-items: center;
  width: 1074px;
  height: 132px;
  border-radius: 15px;
  background: #efefef;
  color: #000;
  font-size: 61px;
  font-weight: 350;
  line-height: 80px;
  letter-spacing: 1.700px;
}
.buy-button span { grid-column: 2; padding-bottom: 8px; }
.arrow { margin-top: 2px; margin-left: -2px; }
.home { width: 417px; height: 15px; margin-top: 63px; border-radius: 8px; background: #eee; }
.scrollbar { position: absolute; right: 9px; top: 1100px; width: 9px; height: 582px; border-radius: 5px; background: #050505; }
```
